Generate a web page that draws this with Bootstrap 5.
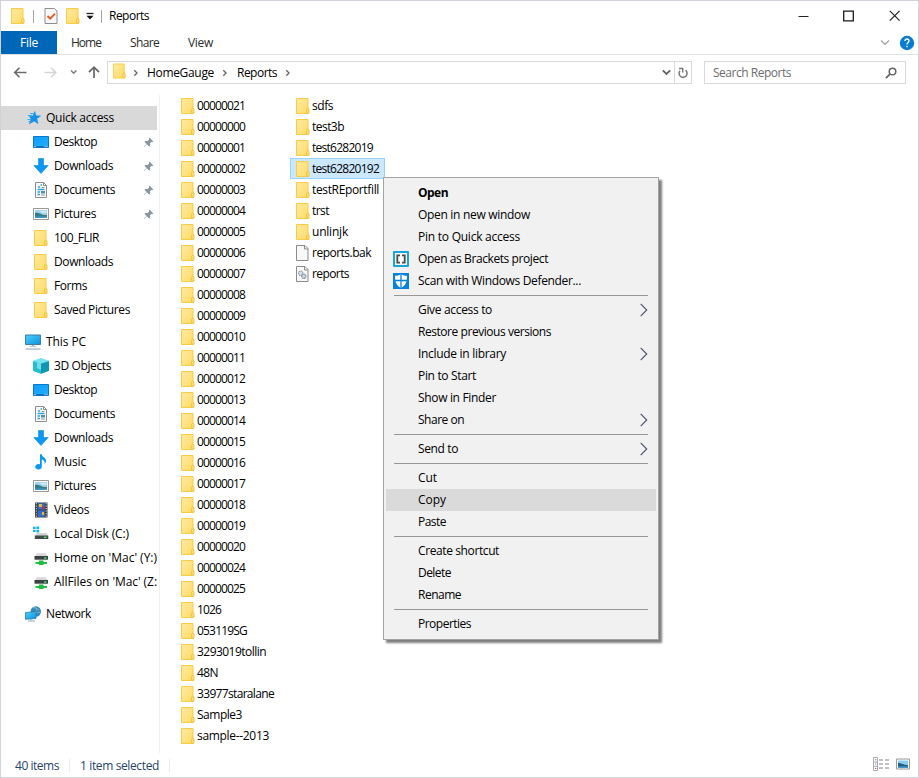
<!DOCTYPE html>
<html lang="en">
<head>
<meta charset="utf-8">
<meta name="viewport" content="width=device-width, initial-scale=1">
<title>Reports</title>
<link rel="stylesheet" href="https://cdn.jsdelivr.net/npm/bootstrap@5.3.0/dist/css/bootstrap.min.css">
<style>
html, body { height: 100%; overflow: hidden; }
body { font-family: "Open Sans", "Noto Sans", sans-serif; font-size: 12px; line-height: 16px; color: #000; font-stretch: 90%; }
svg { display: block; flex: none; }
.lbl { flex: none; white-space: nowrap; }
.explorer { width: 919px; height: 778px; border: 1px solid #d0d4da; background: #fff; }
.titlebar { height: 30px; padding-left: 9px; }
.titlebar .split { margin-left: 7px; }
.titlebar .check { margin-left: 10px; }
.titlebar .second { margin-left: 7px; }
.titlebar .more { margin-left: 5px; }
.titlebar .lbl { margin-left: 7px; }
.window-buttons { margin-right: 17px; }
.tabs { height: 24px; border-bottom: 1px solid #dfe0e1; color: #2b2b2b; }
.tab-file { width: 56px; height: 23px; background: #0067b8; color: #fff; }
.tab-first { margin-left: 14px; }
.tab-gap { margin-left: 29px; }
.help { margin: 0 3px 0 9px; }
.address { height: 40px; padding-top: 6px; }
.field { height: 23px; border: 1px solid #d9d9d9; }
.path-field { width: 585px; }
.path-field .root-crumb { margin-left: 2px; }
.path-field .crumb { margin-left: 8px; }
.path-field .current { margin-left: 9px; }
.path-field .history { margin-right: 3px; }
.search-field { width: 202px; margin-left: 12px; padding: 0 8px; color: #6d6d6d; }
.refresh { width: 17px; height: 21px; border-left: 1px solid #d9d9d9; }
.v-line { width: 1px; height: 13px; background: #a5a5a5; }
.side { width: 159px; border-right: 1px solid #f1f1f1; padding-top: 11px; height: 658px; }
.side-row { height: 24px; width: 156px; padding-left: 32px; overflow: hidden; }
.side-row.top { padding-left: 24px; }
.side-row.picked { background: #d9d9d9; }
.side-row .lbl { margin-left: 5px; }
.side-row .pin { padding-right: 3px; }
.gap-above { margin-top: 8px; }
.files { padding-left: 15px; }
.file-row { height: 21px; padding-left: 4px; border: 1px solid transparent; }
.file-row .lbl { margin-left: 1px; }
.file-row.picked { background: #cce8ff; border-color: #99d1ff; width: 95px; }
.file-col { width: 115px; }
.status { height: 23px; color: #26456c; padding-left: 14px; }
.status .v-line { background: #ececec; margin: 0 10px; }
.view-icons { margin: 0 7px 3px 0; }
.ctx { position: absolute; left: 382px; top: 176px; width: 276px; height: 463px; background: #f1f1f1; border: 1px solid #a3a3a3; padding: 4px 2px; box-shadow: 3px 3px 2px rgba(0,0,0,.5); }
.ctx-row { height: 22px; padding-left: 7px; padding-right: 8px; }
.ctx-row.hover { background: #dadada; }
.ctx-row .slot { width: 25px; flex: none; }
.ctx-sep { height: 7px; padding: 3px 8px 0 8px; }
.ctx-sep div { border-top: 1px solid #979797; }
</style>
<script src="https://cdn.jsdelivr.net/npm/bootstrap@5.3.0/dist/js/bootstrap.bundle.min.js"></script>
</head>
<body>
<svg width="0" height="0" class="position-absolute">
  <defs>
    <linearGradient id="gold" x1="0" y1="0" x2="1" y2="1"><stop offset="0" stop-color="#ffe9a2"/><stop offset="1" stop-color="#ffdc66"/></linearGradient>
    <linearGradient id="sky" x1="0" y1="0" x2="1" y2="1"><stop offset="0" stop-color="#0f9bfb"/><stop offset="1" stop-color="#22b0ff"/></linearGradient>
    <linearGradient id="cyan" x1="0" y1="0" x2="1" y2="1"><stop offset="0" stop-color="#4fd0fb"/><stop offset="1" stop-color="#0a93dd"/></linearGradient>
    <symbol id="folder" viewBox="0 0 16 16"><path d="M1.500.5h11.500v10.500v4.500H1.500z" fill="url(#gold)" stroke="#f8cd45"/><path d="M11.700 15.200v-4.200l1.100-1 1.200 1v4.200z" fill="#ffe084" stroke="#f2bf30" stroke-width=".9"/></symbol>
    <symbol id="star" viewBox="0 0 16 16"><path d="M9.800 1.500l1.200 4.300 4.500.2-3.700 2.800 1.200 4.700-3.900-2.400-4.600 2.700 1.500-4.900-1.500-2.500 3.300-.3z" fill="#1590e4" stroke="#1590e4" stroke-width=".6"/><path d="M5 3.500h3.500M3 5.500h4M3.500 11.500h2.500M2.500 9.500h3" stroke="#35adf3" stroke-width="1"/></symbol>
    <symbol id="desktop" viewBox="0 0 16 16"><path d="M.5 2.500h15v11H.5z" fill="url(#sky)" stroke="#0878cc"/><path d="M1 12.700h14" stroke="#075c9e" stroke-width=".8"/><path d="M1.500 12.700h1.200M11.500 12.700h1M13.500 12.700h1" stroke="#fff"/></symbol>
    <symbol id="down" viewBox="0 0 16 16"><path d="M5.500.5h5v7h4.700L8 15.500.8 7.500h4.700z" fill="#0b98f3" stroke="#0788e0" stroke-width=".6"/></symbol>
    <symbol id="doc" viewBox="0 0 16 16"><path d="M2.500.5h8l3 3v12h-11z" fill="#fafafa" stroke="#8e8e8e"/><path d="M10.500.5v3h3" fill="none" stroke="#8e8e8e"/><path d="M5 5h2M7.500 3h1.500M4.500 7.500h7M4.500 10h2.500M4.500 12.500H7" stroke="#2aa4df" stroke-width="1.300"/><path d="M8.500 5.500h3M8 13h4" stroke="#969696"/><path d="M8 9h4v2.500H8z" fill="#4f91a9"/></symbol>
    <symbol id="pics" viewBox="0 0 16 16"><path d="M.5 2.500h15v11H.5z" fill="#fff" stroke="#989898"/><path d="M2 4h12v8H2z" fill="#9dd3f4"/><path d="M2 7c4-1 6 2.500 12 2V12H2z" fill="#367c87"/><path d="M2 10.500h12V12H2z" fill="#4796c0"/><path d="M7 5h6v1.500H9z" fill="#e7f6fb"/></symbol>
    <symbol id="pc" viewBox="0 0 16 16"><path d="M.5 1h15v9.500H.5z" fill="url(#cyan)" stroke="#3b7da5"/><path d="M7 11h2v1.500H7z" fill="#b2bac0"/><path d="M4.500 12.500h7" stroke="#bdc8d0"/><path d="M.5 15h15" stroke="#8fa0ad" stroke-width="1"/></symbol>
    <symbol id="cube" viewBox="0 0 16 16"><path d="M0 3l8-2.800 8 2.800v9.800l-8 3-8-3z" fill="#40ccdc"/><path d="M8 5.500L16 3v9.800l-8 3z" fill="#0f97b4"/><path d="M0 3l8 2.500v10.300l-8-3z" fill="#27bdd0"/><path d="M0 3L8 .2 16 3 8 5.500z" fill="#75e6ef"/><path d="M4 4.300l4 1.200v6.500l-4 -2z" fill="#b2f7fa" opacity=".55"/></symbol>
    <symbol id="note" viewBox="0 0 16 16"><path d="M7 .3h1.800c.2 2.800 4.600 3.500 4.200 7-.1 1.300-.8 2.200-1.500 2.900.6-2.600-.2-4-2.700-4.800v7.300a3.300 2.800 0 1 1-1.800-2.400z" fill="#079af2"/></symbol>
    <symbol id="film" viewBox="0 0 16 16"><path d="M2 .5h12.500v15H2z" fill="#3d3d40"/><path d="M4.800 1.300h7v6.200h-7zM4.800 8.500h7v6.300h-7z" fill="#346ecb"/><path d="M6 2h3v3H6zM9 10h2v3H9z" fill="#e3b73a"/><path d="M9 4h2.500v3H9z" fill="#a73a65"/><path d="M3.300 1v14M13.200 1v14" stroke="#ddd" stroke-dasharray="1.200 1.300"/></symbol>
    <symbol id="disk" viewBox="0 0 16 16"><path d="M0 .8h2.600v2.200H0zM3.400.4h2.800v2.600H3.400zM0 3.800h2.600V6H0zM3.400 3.800h2.800v2.600H3.400z" fill="#13b5ec"/><path d="M4 7h9.500l1.500 3H2z" fill="#cfd3d4"/><path d="M1.800 9.500h13.500v3.500H1.800z" fill="#454b4d"/><path d="M11 11.300h2.500" stroke="#38e853" stroke-width="1.500"/></symbol>
    <symbol id="netdrive" viewBox="0 0 16 16"><path d="M4 3.200h8.500l2 2.800H2z" fill="#d5d9da"/><path d="M1.500 6h13.500v3.700H1.500z" fill="#3c4244"/><path d="M11 8h2.500" stroke="#38e853" stroke-width="1.400"/><path d="M6 10.500h4.500V12h3.500v2h-3.500v1H6v-1H2.500v-2H6z" fill="#1fbd42"/></symbol>
    <symbol id="network" viewBox="0 0 16 16"><circle cx="10.800" cy="5.500" r="5.200" fill="#3389b6"/><path d="M8 2c3-1 5 1 3 3s3 2 4 1M9 1l5 3" stroke="#79b9d3" fill="none"/><path d="M.5 6.500l10.500-.8v6.800l-10.500.8z" fill="url(#cyan)" stroke="#267caf" stroke-width=".8"/><path d="M6 13v1.500M3 15h7" stroke="#91a6b3"/></symbol>
    <symbol id="pin" viewBox="0 0 12 12"><path d="M7.200.8l4 4-1.100.8-.8-.3-1.800 1.900.2 2.300-1 .8-2.400-2.400L1 11.200l-.3-.3 3.200-3.400-2.300-2.200.8-1 2.500.2 1.800-1.800-.4-.9z" fill="#8393a0"/></symbol>
    <symbol id="page" viewBox="0 0 16 16"><path d="M1.500.5h8.500l3 3v12H1.500z" fill="#f8f8f8" stroke="#8b8b8b"/><path d="M9.500.5v3.500H13" fill="none" stroke="#8b8b8b"/></symbol>
    <symbol id="gears" viewBox="0 0 16 16"><use href="#page"/><circle cx="5.800" cy="7.200" r="2.200" fill="#d7e1e8" stroke="#8b9aa4" stroke-width="1.100" stroke-dasharray="1.300 .5"/><circle cx="8.800" cy="10.300" r="2.200" fill="#c5d4de" stroke="#7f8f9a" stroke-width="1.100" stroke-dasharray="1.300 .5"/></symbol>
    <symbol id="chev" viewBox="0 0 8 14"><path d="M.7.800l6 6.200-6 6.200" fill="none" stroke="#4d5777" stroke-width="1.200"/></symbol>
    <symbol id="crumb" viewBox="0 0 6 8"><path d="M1.300 1.300L4 4 1.300 6.700" fill="none" stroke="#646464" stroke-width="1.300"/></symbol>
  </defs>
</svg>

<main class="explorer d-flex flex-column position-relative">
  <header class="titlebar d-flex align-items-center">
    <svg width="16" height="16"><use href="#folder"/></svg>
    <div class="v-line split"></div>
    <svg class="check" width="14" height="16" viewBox="0 0 14 16"><path d="M1 .5h9.500L13 3v12.500H1z" fill="#f8f8f8" stroke="#8d8d8d"/><path d="M3.500 8l2.700 2.700 4.800-5" fill="none" stroke="#ef5a24" stroke-width="1.900"/></svg>
    <svg class="second" width="16" height="16"><use href="#folder"/></svg>
    <svg class="more" width="8" height="8" viewBox="0 0 8 8"><path d="M.5 1.500h7" stroke="#222" stroke-width="1.300"/><path d="M.5 3.800h7L4 7.500z" fill="#111"/></svg>
    <div class="v-line split"></div>
    <span class="lbl" data-w="40">Reports</span>
    <svg class="window-buttons ms-auto" width="104" height="12" viewBox="0 0 104 12"><path d="M1.500 6.500h10" stroke="#222"/><path d="M46.700 1.200h9.600v9.600h-9.600z" fill="none" stroke="#1b1b1b" stroke-width="1.300"/><path d="M92.800.8l9.800 9.800M102.600.8l-9.800 9.800" stroke="#222" stroke-width="1.200"/></svg>
  </header>
  <nav class="tabs d-flex align-items-center">
    <div class="tab-file d-flex align-items-center justify-content-center"><span class="lbl" data-w="18">File</span></div>
    <span class="lbl tab-first" data-w="30">Home</span>
    <span class="lbl tab-gap" data-w="29">Share</span>
    <span class="lbl tab-gap" data-w="25">View</span>
    <svg class="ms-auto" width="10" height="7" viewBox="0 0 10 7"><path d="M1 1.500l4 3.800 4-3.800" fill="none" stroke="#a5a5a5" stroke-width="1.300"/></svg>
    <svg class="help" width="16" height="16" viewBox="0 0 16 16"><circle cx="8" cy="8" r="7.200" fill="#087bd5"/><path d="M6 6c0-2.700 4-2.600 4-.2 0 1.700-2 1.800-2 3.800M8 10.800v1.500" fill="none" stroke="#fff" stroke-width="1.400"/></svg>
  </nav>
  <div class="address d-flex align-items-start">
    <svg width="106" height="23" viewBox="0 0 106 23"><path d="M25.500 11.500H14M18.500 6.700l-4.800 4.800 4.800 4.800" fill="none" stroke="#6b6b6b" stroke-width="1.600"/><path d="M43.500 11.500H55M50 6.700l4.800 4.800-4.800 4.800" fill="none" stroke="#d5d5d5" stroke-width="1.600"/><path d="M70 9.500l2.700 2.700 2.700-2.700" fill="none" stroke="#777" stroke-width="1.400"/><path d="M93 17V6.500M88 11.200l5-5 5 5" fill="none" stroke="#666" stroke-width="1.700"/></svg>
    <div class="field path-field d-flex align-items-center">
      <svg class="ms-1 me-1 mb-1" width="15" height="16"><use href="#folder"/></svg>
      <svg class="root-crumb" width="6" height="8"><use href="#crumb"/></svg>
      <span class="lbl ms-2" data-w="67">HomeGauge</span>
      <svg class="crumb" width="6" height="8"><use href="#crumb"/></svg>
      <span class="lbl current" data-w="40">Reports</span>
      <svg class="crumb" width="6" height="8"><use href="#crumb"/></svg>
      <svg class="history ms-auto" width="9" height="7" viewBox="0 0 9 7"><path d="M.8 1.300l3.700 3.700 3.700-3.700" fill="none" stroke="#666" stroke-width="1.900"/></svg>
      <div class="refresh d-flex align-items-center justify-content-center"><svg width="12" height="12" viewBox="0 0 12 12"><path d="M8.500 3.200A4 4 0 1 1 3 3.800" fill="none" stroke="#777" stroke-width="1.500"/><path d="M2 1.500h4.200M5.700 1v4.500" fill="none" stroke="#777" stroke-width="1.400"/></svg></div>
    </div>
    <div class="field search-field d-flex align-items-center">
      <span class="lbl" data-w="78">Search Reports</span>
      <svg class="ms-auto" width="12" height="12" viewBox="0 0 12 12"><circle cx="7.500" cy="4.500" r="3.300" fill="none" stroke="#666" stroke-width="1.500"/><path d="M5.200 6.900L.9 11.200" stroke="#666" stroke-width="1.900"/></svg>
    </div>
  </div>

  <div class="d-flex flex-grow-1">
    <aside class="side" id="side"></aside>
    <section class="files d-flex">
      <div class="file-col" id="filesA"></div>
      <div class="file-col" id="filesB"></div>
    </section>
  </div>

  <footer class="status d-flex align-items-center">
    <span class="lbl" data-w="44">40 items</span>
    <div class="v-line"></div>
    <span class="lbl" data-w="79">1 item selected</span>
    <div class="v-line"></div>
    <svg class="view-icons ms-auto" width="38" height="14" viewBox="0 0 38 14"><path d="M.5.500h4v13h-4zM.5 5h4M.5 9.300h4" fill="#fff" stroke="#aaa"/><path d="M2 2.800h1.300" stroke="#777"/><path d="M2 7h1.300" stroke="#4a91d8"/><path d="M2 11.500h1.300" stroke="#e33"/><path d="M6 3h4M12 3h4M6 7h4M12 7h4M6 11h4M12 11h4" stroke="#858585" stroke-width="1.200"/><path d="M23.500 2h13v10h-13z" fill="#fff" stroke="#999"/><path d="M25 3.500h10v7H25z" fill="#8bccf2"/><path d="M25 6c4 0 5 2 10 2v2.500H25z" fill="#245f7d"/><path d="M25 9h10v1.500H25z" fill="#2884c4"/></svg>
  </footer>

  <div class="ctx" id="ctx"></div>
</main>

<script>
const icon = (id, s = 16) => `<svg width="${s}" height="${s}"><use href="#${id}"/></svg>`;
const label = (text, w) => `<span class="lbl" data-w="${w}">${text}</span>`;

// Navigation pane: [icon, text, text width, row classes, pinned]
const side = [
  ['star','Quick access',68,'top picked'],
  ['desktop','Desktop',43,'',1], ['down','Downloads',59,'',1], ['doc','Documents',61,'',1], ['pics','Pictures',42,'',1],
  ['folder','100_FLIR',45,''], ['folder','Downloads',59,''], ['folder','Forms',33,''], ['folder','Saved Pictures',76,''],
  ['pc','This PC',40,'top gap-above'],
  ['cube','3D Objects',57,''], ['desktop','Desktop',43,''], ['doc','Documents',61,''], ['down','Downloads',59,''],
  ['note','Music',32,''], ['pics','Pictures',42,''], ['film','Videos',35,''], ['disk','Local Disk (C:)',75,''],
  ['netdrive',"Home on 'Mac' (Y:)",103,''], ['netdrive',"AllFiles on 'Mac' (Z:",103,''],
  ['network','Network',45,'top gap-above']
];
document.getElementById('side').innerHTML = side.map(([i, t, w, c, p]) =>
  `<div class="side-row d-flex align-items-center ${c}">${icon(i)}${label(t, w)}${p ? '<div class="pin ms-auto">' + icon('pin', 11) + '</div>' : ''}</div>`).join('');

const numbered = [21,0,1,2,3,4,5,6,7,8,9,10,11,12,13,14,15,16,17,18,19,20,24,25]
  .map(n => ['folder', String(n).padStart(8, '0'), 48]);
const colA = [...numbered, ['folder','1026',24], ['folder','053119SG',50], ['folder','3293019tollin',69], ['folder','48N',21],
  ['folder','33977staralane',77], ['folder','Sample3',45], ['folder','sample--2013',72]];
const colB = [['folder','sdfs',21], ['folder','test3b',32], ['folder','test6282019',61], ['folder','test62820192',67,'picked'],
  ['folder','testREportfill',67], ['folder','trst',17], ['folder','unlinjk',36], ['page','reports.bak',59], ['gears','reports',37]];
const fileRows = rows => rows.map(([i, t, w, c = '']) =>
  `<div class="file-row d-flex align-items-center ${c}">${icon(i, 16)}${label(t, w)}</div>`).join('');
document.getElementById('filesA').innerHTML = fileRows(colA);
document.getElementById('filesB').innerHTML = fileRows(colB);

const brackets = '<svg width="16" height="16" viewBox="0 0 16 16"><rect width="16" height="16" rx="1" fill="#17a5dc"/><path d="M2 2h12v12H2z" fill="#f8f8f8"/><path d="M7 4.300H4.300v7.400H7M9 4.300h2.700v7.400H9" fill="none" stroke="#4b4b4b" stroke-width="1.800"/></svg>';
const shield = '<svg width="16" height="16" viewBox="0 0 16 16"><path d="M0 0h16v16H0z" fill="#0780de"/><path d="M8 1c2 1.500 4 1.700 6 1.700 0 6-1 9.500-6 12.300-5-2.800-6-6.300-6-12.300C4 2.700 6 2.500 8 1z" fill="#fff"/><path d="M8 1v14M2 7.500h12" stroke="#0780de" stroke-width="1.300"/></svg>';
// Context menu: [text, text width, leading icon, has submenu, row classes]; null is a separator
const menu = [
  ['Open',30,'',0,'fw-bold'], ['Open in new window',112], ['Pin to Quick access',102], ['Open as Brackets project',130,brackets],
  ['Scan with Windows Defender...',163,shield], null,
  ['Give access to',74,'',1], ['Restore previous versions',133], ['Include in library',88,'',1], ['Pin to Start',58],
  ['Show in Finder',78], ['Share on',46,'',1], null, ['Send to',40,'',1], null,
  ['Cut',19], ['Copy',28,'',0,'hover'], ['Paste',28], null,
  ['Create shortcut',81], ['Delete',33], ['Rename',43], null, ['Properties',53]
];
document.getElementById('ctx').innerHTML = menu.map(m => m
  ? `<div class="ctx-row d-flex align-items-center ${m[4] || ''}"><div class="slot">${m[2] || ''}</div>${label(m[0], m[1])}${m[3] ? '<svg class="ms-auto" width="8" height="14"><use href="#chev"/></svg>' : ''}</div>`
  : '<div class="ctx-sep"><div></div></div>').join('');

// Tighten or loosen tracking so each label has its intended width
document.querySelectorAll('.lbl').forEach(e => {
  const natural = e.getBoundingClientRect().width;
  e.style.letterSpacing = ((e.dataset.w - natural) / e.textContent.length).toFixed(3) + 'px';
});
</script>
</body>
</html>
